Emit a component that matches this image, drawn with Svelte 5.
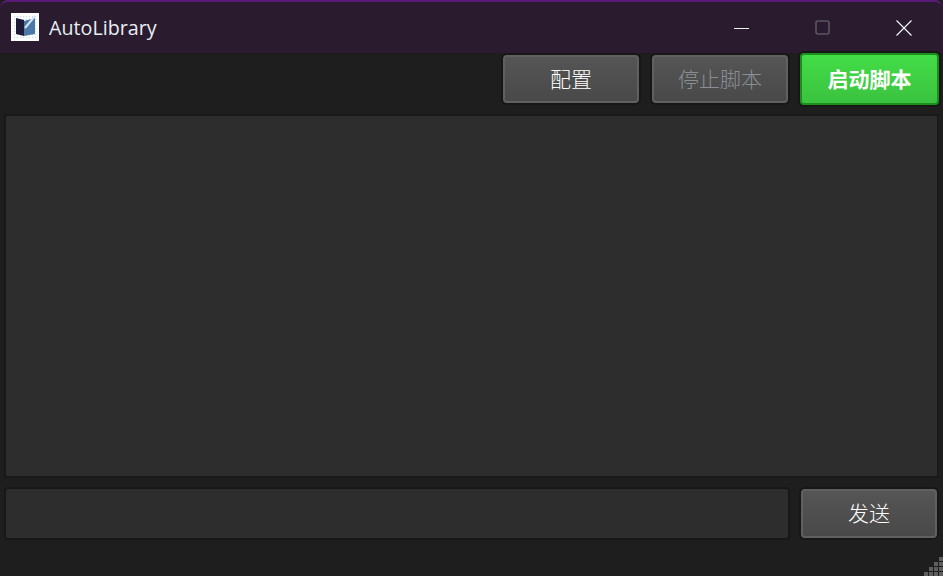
<script>
    let message = "";

    // resize grip: staircase of little squares, bottom right
    const grip = [];
    for (let row = 0; row < 4; row++) {
        for (let col = 3 - row; col < 4; col++) {
            grip.push({ x: col * 5, y: row * 5 });
        }
    }
</script>

<div class="window">
    <header class="titlebar">
        <svg class="logo" viewBox="0 0 28 28" width="28" height="28">
            <defs>
                <pattern id="dots" width="3" height="3" patternUnits="userSpaceOnUse">
                    <rect width="1.2" height="1.2" fill="#c4dcec" />
                </pattern>
            </defs>
            <rect width="28" height="28" fill="#fff" />
            <rect x="1" y="1" width="26" height="26" fill="url(#dots)" />
            <path d="M5 5 L13 7 V23 L5 21 Z" fill="#1f1a3a" />
            <path d="M13 8 L24 5 V21 L13 23 Z" fill="#4a78a8" />
            <path d="M14 15 L24 3" stroke="#d5e6f2" stroke-width="2" fill="none" />
        </svg>
        <span class="title">AutoLibrary</span>
        <div class="controls">
            <svg class="ctl" viewBox="0 0 16 16" width="16" height="16">
                <path d="M0 8.5H15" stroke="#f2f2f2" stroke-width="1" />
            </svg>
            <svg class="ctl" viewBox="0 0 16 16" width="16" height="16">
                <rect x="1" y="1" width="13" height="13" rx="2" fill="none" stroke="#5c5560" stroke-width="1.6" />
            </svg>
            <svg class="ctl" viewBox="0 0 16 16" width="16" height="16">
                <path d="M0.5 0.5L15.5 15.5M15.5 0.5L0.5 15.5" stroke="#f0f4f6" stroke-width="1.2" />
            </svg>
        </div>
    </header>

    <main class="content">
        <div class="toolbar">
            <button class="btn">配置</button>
            <button class="btn stop" disabled>停止脚本</button>
            <button class="btn start">启动脚本</button>
        </div>

        <div class="log"></div>

        <div class="sendrow">
            <input class="input" bind:value={message} />
            <button class="btn send">发送</button>
        </div>
    </main>

    <svg class="grip" viewBox="0 0 19 19" width="19" height="19">
        {#each grip as sq}
            <rect x={sq.x} y={sq.y} width="4" height="4" fill="#5e5e5e" />
        {/each}
    </svg>
</div>

<style>
    :global(body) {
        margin: 0;
        background: #1e1e1e;
    }

    .window {
        position: relative;
        width: 943px;
        height: 576px;
        display: flex;
        flex-direction: column;
        overflow: hidden;
        background: #1e1e1e;
        font-family: "Noto Sans CJK SC", "Noto Sans", sans-serif;
    }

    .titlebar {
        height: 51px;
        flex: none;
        display: flex;
        align-items: center;
        padding: 0 0 0 11px;
        background: #2a1b2f;
        border-top: 2px solid #5a1a7a;
        border-radius: 8px 8px 0 0;
    }

    .logo {
        flex: none;
        margin-top: -1px;
    }

    .title {
        margin-left: 10px;
        font-family: "Open Sans", sans-serif;
        font-size: 19.7px;
        color: #e8eef2;
    }

    .controls {
        margin-left: auto;
        display: flex;
        gap: 65px;
        padding-right: 31px;
    }

    .ctl {
        display: block;
    }

    .content {
        flex: 1;
        display: flex;
        flex-direction: column;
        padding: 2px 5px 37px 5px;
    }

    .toolbar {
        display: flex;
        justify-content: flex-end;
        align-items: center;
        gap: 13px;
        height: 48px;
        margin-right: -1px;
    }

    .btn {
        width: 136px;
        height: 48px;
        box-sizing: border-box;
        padding: 0 0 3px;
        border: 2px solid #606060;
        border-radius: 4px;
        box-shadow: 0 0 0 2px #171717;
        background: linear-gradient(#555555, #494949);
        color: #fff;
        font-family: inherit;
        font-size: 21px;
        font-weight: 300;
    }

    .stop {
        color: #8a8f96;
    }

    .start {
        width: 139px;
        height: 52px;
        margin-left: -1px;
        border-color: #1a8f1c;
        background: linear-gradient(#43dd47, #3bc23f);
        font-weight: 700;
    }

    .log {
        height: 362px;
        margin-top: 12px;
        box-sizing: border-box;
        background: #2d2d2d;
        box-shadow: 0 0 0 1px #181818;
        border: 1px solid #1a1a1a;
        border-radius: 2px;
    }

    .sendrow {
        display: flex;
        align-items: center;
        justify-content: space-between;
        margin-top: 11px;
    }

    .input {
        width: 784px;
        height: 51px;
        box-sizing: border-box;
        background: #2d2d2d;
        border: 1px solid #171717;
        box-shadow: 0 0 0 1px #181818;
        border-radius: 3px;
        color: #fff;
    }

    .send {
        height: 49px;
        margin-right: 1px;
    }

    .grip {
        position: absolute;
        right: 0;
        bottom: 0;
    }
</style>
